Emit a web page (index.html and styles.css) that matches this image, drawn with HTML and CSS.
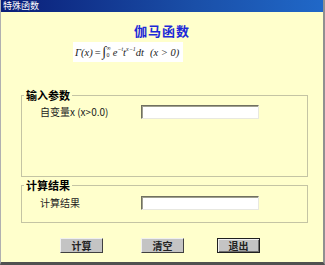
FILE: index.html
```html
<!DOCTYPE html>
<html lang="zh-CN">
<head>
<meta charset="utf-8"/>
<title>特殊函数</title>
<link rel="stylesheet" href="styles.css">
</head>
<body>
<div class="window">
<div class="titlebar">特殊函数</div>
<h1 class="heading">伽马函数</h1>
<div class="formula">
<span class="f-gamma">Γ(x)</span>
<span class="f-eq">=</span>
<span class="f-int">∫</span>
<span class="f-limits"><span class="f-up">∞</span><span class="f-lo">0</span></span>
<span class="f-body">e<sup>−t</sup>t<sup>x−1</sup>dt</span>
<span class="f-cond">(x &gt; 0)</span>
</div>
<fieldset class="group group-input">
<legend>输入参数</legend>
<div class="row">
<label class="row-label" for="xval">自变量x (x&gt;0.0)</label>
<input id="xval" class="field" type="text"/>
</div>
</fieldset>
<fieldset class="group group-result">
<legend>计算结果</legend>
<div class="row">
<label class="row-label" for="result">计算结果</label>
<input id="result" class="field" type="text" readonly/>
</div>
</fieldset>
<div class="buttons">
<button class="btn">计算</button>
<button class="btn btn-clear">清空</button>
<button class="btn btn-exit">退出</button>
</div>
</div>
</body>
</html>
```

FILE: styles.css
```css
body {
  margin: 0;
  padding: 0;
  background: #ffffcc;
  font-family: "Liberation Sans", "Noto Sans CJK SC", sans-serif;
  font-size: 11px;
  color: #000;
}
.window {
  width: 325px;
  height: 265px;
  box-sizing: border-box;
  background: #ffffcc;
  border-left: 1px solid #b0b0b0;
  border-right: 2px solid #909090;
  border-bottom: 3px solid #505050;
  overflow: hidden;
}
.titlebar {
  height: 12px;
  line-height: 12px;
  padding-left: 2px;
  font-size: 9px;
  color: #fff;
  background: linear-gradient(to right, #0a1e78, #1a4fa8 60%, #2068c8);
  font-family: "Noto Sans CJK SC", sans-serif;
}
.heading {
  margin: 11px 0 0 0;
  font-size: 13px;
  line-height: 16px;
  font-weight: bold;
  color: #1c28d8;
  text-align: center;
  letter-spacing: 1px;
  font-family: "Noto Sans CJK SC", sans-serif;
}
.formula {
  display: flex;
  align-items: center;
  margin: 3px 0 0 72px;
  width: 110px;
  height: 20px;
  padding-left: 2px;
  box-sizing: border-box;
  background: #fff;
  font-family: "Liberation Serif", serif;
  font-style: italic;
  font-size: 10.5px;
  color: #222;
  white-space: nowrap;
  overflow: hidden;
}
.f-eq {
  margin: 0 2px;
  font-style: normal;
}
.f-int {
  font-style: normal;
  font-size: 14px;
}
.f-limits {
  display: flex;
  flex-direction: column;
  font-size: 6px;
  line-height: 7px;
  font-style: normal;
  margin-right: 2px;
}
.f-body sup {
  font-size: 6px;
}
.f-cond {
  margin-left: 6px;
}
.group {
  margin: 0 0 0 20px;
  padding: 0;
  width: 287px;
  box-sizing: border-box;
  border: 1px solid #c4c4a4;
}
.group legend {
  margin-left: 2px;
  padding: 0 2px;
  font-weight: bold;
  font-size: 11px;
  line-height: 12px;
  font-family: "Noto Sans CJK SC", sans-serif;
}
.group-input {
  margin-top: 27px;
  height: 88px;
}
.group-result {
  margin-top: 2px;
  height: 44px;
}
.row {
  display: flex;
  align-items: center;
  padding-left: 18px;
  margin-top: 3px;
}
.group-result .row {
  margin-top: 4px;
}
.row-label {
  width: 101px;
  font-size: 10px;
  color: #222;
  font-family: "Noto Sans CJK SC", sans-serif;
}
.field {
  width: 118px;
  height: 14px;
  box-sizing: border-box;
  margin: 0;
  padding: 0;
  background: #fff;
  border: 1px solid;
  border-color: #707060 #e8e8e0 #e8e8e0 #707060;
  box-shadow: inset 1px 1px 0 #a0a090;
}
.buttons {
  display: flex;
  padding-left: 59px;
  margin-top: 15px;
}
.btn {
  width: 43px;
  height: 15px;
  margin: 0;
  padding: 0;
  font-size: 10px;
  font-weight: bold;
  line-height: 13px;
  color: #222;
  background: #c4c4c4;
  border: 1px solid;
  border-color: #f0f0f0 #404040 #404040 #f0f0f0;
  font-family: "Noto Sans CJK SC", sans-serif;
}
.btn-clear {
  margin-left: 38px;
}
.btn-exit {
  margin-left: 33px;
  border-color: #202020;
  box-shadow: inset 1px 1px 0 #f0f0f0, inset -1px -1px 0 #707070;
}
```
